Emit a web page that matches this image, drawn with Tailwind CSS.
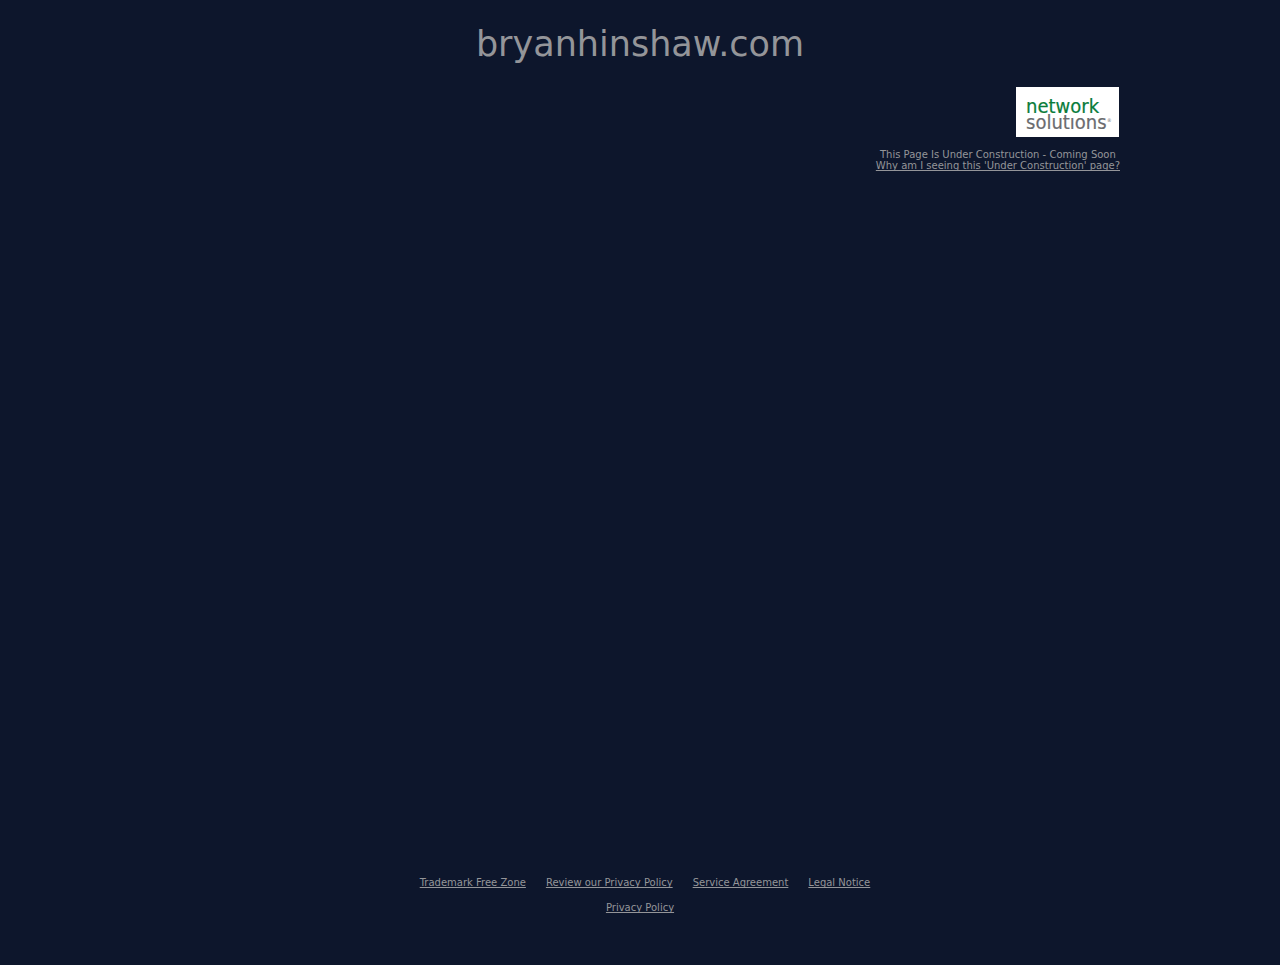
<!DOCTYPE html>
<html lang="en">
<head>
<meta charset="utf-8">
<title>bryanhinshaw.com</title>
<script src="https://cdn.jsdelivr.net/npm/@tailwindcss/browser@4"></script>
</head>
<body class="flex min-h-screen flex-col bg-[#0d162c] font-['DejaVu_Sans',sans-serif] text-[10px] leading-[11px] text-[#949599]">
  <header class="mx-auto w-full max-w-[960px] pt-6">
    <h1 class="text-center text-[35px] leading-10">bryanhinshaw.com</h1>
    <div class="mt-[23px] flex flex-col items-end">
      <svg class="mr-px h-[50px] w-[103px] bg-white" viewBox="0 0 103 50" role="img" aria-label="network solutions" font-family="'DejaVu Sans Condensed', 'Open Sans', sans-serif">
        <text x="10" y="26" font-size="20" fill="#0a7c3a" stroke="#0a7c3a" stroke-width=".2">network</text>
        <text x="10" y="42" font-size="20" fill="#6b6c6f" stroke="#6b6c6f" stroke-width=".2">solutıons</text>
        <text x="91" y="35" font-size="5" fill="#6b6c6f">®</text>
      </svg>
      <div class="mt-3 flex flex-col items-center">
        <p>This Page Is Under Construction - Coming Soon</p>
        <a href="#" class="underline [text-decoration-skip-ink:none]">Why am I seeing this 'Under Construction' page?</a>
      </div>
    </div>
  </header>
  <footer class="mt-auto flex flex-col items-center gap-[14px] pb-[52px] [text-decoration-skip-ink:none]">
    <nav class="flex gap-5 pl-[10px]">
      <a href="#" class="underline">Trademark Free Zone</a>
      <a href="#" class="underline">Review our Privacy Policy</a>
      <a href="#" class="underline">Service Agreement</a>
      <a href="#" class="underline">Legal Notice</a>
    </nav>
    <a href="#" class="underline">Privacy Policy</a>
  </footer>
</body>
</html>
